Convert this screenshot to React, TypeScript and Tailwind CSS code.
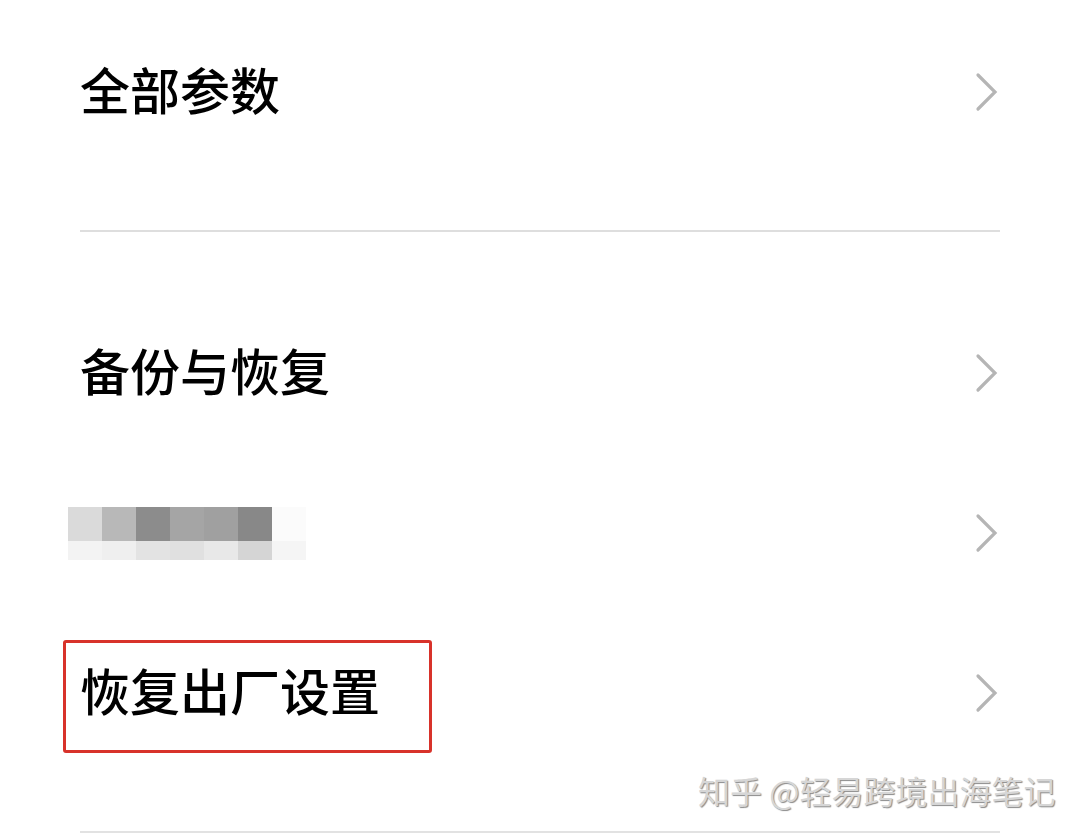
import React from "react";

const cjk = { fontFamily: '"Noto Sans CJK SC", "Noto Sans", sans-serif' };

const blurTop = ["#dadada", "#b8b8b8", "#8c8c8c", "#a5a5a5", "#a0a0a0", "#888888", "#fbfbfb"];
const blurBottom = ["#f3f3f3", "#efefef", "#e3e3e3", "#e0e0e0", "#e8e8e8", "#d5d5d5", "#f5f5f5"];

function Chevron() {
  return (
    <svg width="26" height="40" viewBox="0 0 26 40" className="shrink-0">
      <polyline
        points="4,3 21,20 4,37"
        fill="none"
        stroke="#b5b5b5"
        strokeWidth="3.2"
        strokeLinecap="round"
        strokeLinejoin="miter"
      />
    </svg>
  );
}

function Row({ children, className = "" }: { children: React.ReactNode; className?: string }) {
  return (
    <div className={`relative flex items-center justify-between pl-[80px] pr-[80px] ${className}`}>
      {children}
      <Chevron />
    </div>
  );
}

function Label({ children }: { children: React.ReactNode }) {
  return <span className="mb-[8px] text-[50px] font-medium leading-none">{children}</span>;
}

export default function App() {
  return (
    <div className="relative w-[1080px] h-[837px] overflow-hidden bg-white text-black" style={cjk}>
      {/* 全部参数 */}
      <Row className="h-[184px]">
        <Label>全部参数</Label>
      </Row>

      <div className="mt-[46px] mx-[80px] h-[2px] bg-[#dedede]" />

      <div className="mt-[61px]">
        <Row className="h-[160px]">
          <Label>备份与恢复</Label>
        </Row>

        {/* mosaic */}
        <Row className="h-[160px]">
          <div className="-ml-[12px] flex flex-col">
            <div className="grid grid-cols-7">
              {blurTop.map((c, i) => (
                <div key={i} className="w-[34px] h-[34px]" style={{ background: c }} />
              ))}
            </div>
            <div className="grid grid-cols-7">
              {blurBottom.map((c, i) => (
                <div key={i} className="w-[34px] h-[19px]" style={{ background: c }} />
              ))}
            </div>
          </div>
        </Row>

        <Row className="h-[160px]">
          <Label>恢复出厂设置</Label>
          <div className="absolute left-[63px] top-[27px] w-[369px] h-[113px] border-[3px] border-[#d8322a] rounded-[3px]" />
        </Row>
      </div>

      <div className="mt-[58px] mx-[80px] h-[2px] bg-[#e2e2e2]" />

      {/* watermark */}
      <div
        className="absolute left-[698px] top-[774px] text-[32px] leading-none text-[#d6d6d6] whitespace-nowrap"
        style={{ textShadow: "1px 1px 1px #8a8a8a" }}
      >
        知乎 @轻易跨境出海笔记
      </div>
    </div>
  );
}
